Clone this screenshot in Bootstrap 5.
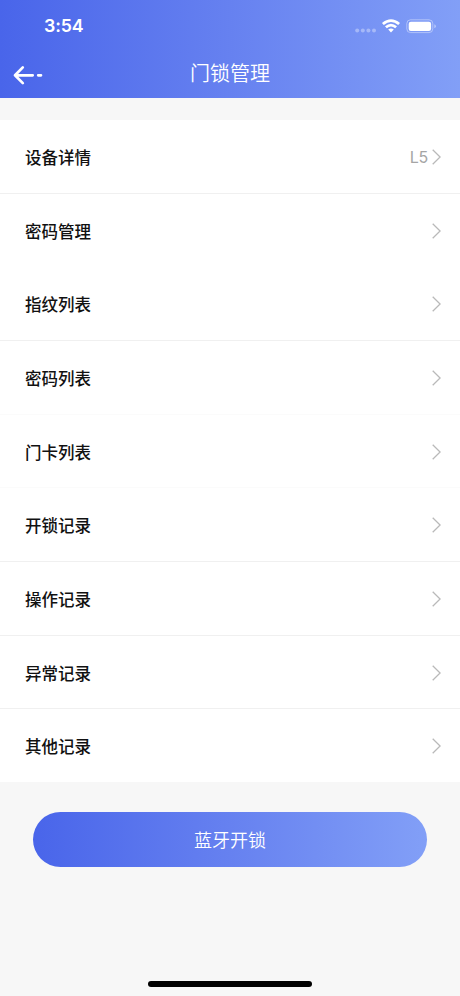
<!DOCTYPE html>
<html lang="zh-CN">
<head>
<meta charset="utf-8">
<meta name="viewport" content="width=device-width, initial-scale=1">
<title>门锁管理</title>
<link href="https://cdn.jsdelivr.net/npm/bootstrap@5.3.0/dist/css/bootstrap.min.css" rel="stylesheet">
<style>
  body { background: #f7f7f7; font-family: Inter, "Noto Sans CJK SC", sans-serif; }
  .screen { height: 996px; }
  .brand-gradient { background: linear-gradient(90deg, #4965ea 0%, #6681f0 50%, #829ff7 100%); }
  .app-header { height: 98px; margin-bottom: 22px; }
  .status-bar { height: 51px; padding-left: 44px; padding-right: 24px; }
  .clock { font-size: 17.8px; font-weight: 600; line-height: 20px; letter-spacing: -.1px; }
  .title-bar { height: 47px; display: grid; grid-template-columns: 60px 1fr 60px; }
  .page-title { font-size: 20px; font-weight: 350; line-height: 44px; font-family: "Noto Sans CJK SC", sans-serif; }
  .back-link { padding: 13px 0 0 12px; }
  .menu-list { --bs-list-group-border-radius: 0; height: 662px; }
  .menu-list .list-group-item { flex: 1 1 0; border: 0; border-bottom: 1px solid #f0f0f0; padding: 1px 19px 0 25px; color: #111; font-size: 16.5px; font-weight: 500; }
  .menu-list .list-group-item.no-rule { border-bottom-color: #fff; }
  .menu-list .list-group-item.soft-rule { border-bottom-color: #fbfbfb; }
  .item-label { padding-top: 3px; }
  .model { color: #a5a5a5; font-size: 16px; font-weight: 400; font-family: Inter, sans-serif; letter-spacing: -.2px; }
  .unlock { height: 55px; margin: 30px 33px 0; padding: 2px 0 0; border: 0; font-size: 18px; font-weight: 350; }
  .home-indicator { width: 164px; height: 6px; background: #000; margin-bottom: 9px; }
</style>
<script src="https://cdn.jsdelivr.net/npm/bootstrap@5.3.0/dist/js/bootstrap.bundle.min.js"></script>
</head>
<body>
<div class="screen d-flex flex-column overflow-hidden">
  <header class="app-header brand-gradient text-white flex-shrink-0">
    <div class="status-bar d-flex align-items-center justify-content-between">
      <span class="clock">3:54</span>
      <svg width="82" height="16" viewBox="354 17 82 16" fill="none" aria-hidden="true">
        <g fill="#fff" fill-opacity=".35">
          <circle cx="357.2" cy="29.6" r="2"/><circle cx="362.8" cy="29.6" r="2"/><circle cx="368.4" cy="29.6" r="2"/><circle cx="374" cy="29.6" r="2"/>
        </g>
        <g stroke="#fff" stroke-width="2.8">
          <path d="M382.9 23Q391 16.2 399.1 23"/>
          <path d="M385.9 26.3Q391 22 396.1 26.3"/>
        </g>
        <path d="M388.2 28.6Q391 26.4 393.8 28.6L391 31.6Z" fill="#fff"/>
        <rect x="406.8" y="18.8" width="26" height="12.8" rx="3.8" stroke="#fff" stroke-opacity=".4"/>
        <rect x="408.7" y="20.7" width="22.4" height="9.2" rx="2.2" fill="#fff"/>
        <path d="M434.3 23.2q1.6.6 1.6 2t-1.6 2z" fill="#fff" fill-opacity=".45"/>
      </svg>
    </div>
    <div class="title-bar">
      <a href="#" class="back-link text-white" aria-label="返回">
        <svg class="d-block" width="32" height="22" viewBox="12 64 32 22" fill="none" stroke="#fff" stroke-width="2.7" stroke-linecap="round" stroke-linejoin="round">
          <path d="M22.8 67.4 15 75.3l7.8 7.8M15 75.3h17.7M38.2 75.3h2.8"/>
        </svg>
      </a>
      <h1 class="page-title text-center m-0">门锁管理</h1>
    </div>
  </header>

  <nav class="menu-list list-group list-group-flush flex-shrink-0">
    <a href="#" class="list-group-item d-flex align-items-center justify-content-between"><span class="item-label">设备详情</span><span class="d-flex align-items-center gap-1"><span class="model">L5</span><svg width="9" height="16" viewBox="0 0 9 16" fill="none" stroke="#b9b9b9" stroke-width="1.3"><path d="M.7.8 8.1 8 .7 15.2"/></svg></span></a>
    <a href="#" class="list-group-item no-rule d-flex align-items-center justify-content-between"><span class="item-label">密码管理</span><svg width="9" height="16" viewBox="0 0 9 16" fill="none" stroke="#b9b9b9" stroke-width="1.3"><path d="M.7.8 8.1 8 .7 15.2"/></svg></a>
    <a href="#" class="list-group-item d-flex align-items-center justify-content-between"><span class="item-label">指纹列表</span><svg width="9" height="16" viewBox="0 0 9 16" fill="none" stroke="#b9b9b9" stroke-width="1.3"><path d="M.7.8 8.1 8 .7 15.2"/></svg></a>
    <a href="#" class="list-group-item soft-rule d-flex align-items-center justify-content-between"><span class="item-label">密码列表</span><svg width="9" height="16" viewBox="0 0 9 16" fill="none" stroke="#b9b9b9" stroke-width="1.3"><path d="M.7.8 8.1 8 .7 15.2"/></svg></a>
    <a href="#" class="list-group-item soft-rule d-flex align-items-center justify-content-between"><span class="item-label">门卡列表</span><svg width="9" height="16" viewBox="0 0 9 16" fill="none" stroke="#b9b9b9" stroke-width="1.3"><path d="M.7.8 8.1 8 .7 15.2"/></svg></a>
    <a href="#" class="list-group-item d-flex align-items-center justify-content-between"><span class="item-label">开锁记录</span><svg width="9" height="16" viewBox="0 0 9 16" fill="none" stroke="#b9b9b9" stroke-width="1.3"><path d="M.7.8 8.1 8 .7 15.2"/></svg></a>
    <a href="#" class="list-group-item d-flex align-items-center justify-content-between"><span class="item-label">操作记录</span><svg width="9" height="16" viewBox="0 0 9 16" fill="none" stroke="#b9b9b9" stroke-width="1.3"><path d="M.7.8 8.1 8 .7 15.2"/></svg></a>
    <a href="#" class="list-group-item d-flex align-items-center justify-content-between"><span class="item-label">异常记录</span><svg width="9" height="16" viewBox="0 0 9 16" fill="none" stroke="#b9b9b9" stroke-width="1.3"><path d="M.7.8 8.1 8 .7 15.2"/></svg></a>
    <a href="#" class="list-group-item no-rule d-flex align-items-center justify-content-between"><span class="item-label">其他记录</span><svg width="9" height="16" viewBox="0 0 9 16" fill="none" stroke="#b9b9b9" stroke-width="1.3"><path d="M.7.8 8.1 8 .7 15.2"/></svg></a>
  </nav>

  <button type="button" class="unlock btn rounded-pill brand-gradient text-white flex-shrink-0">蓝牙开锁</button>
  <div class="home-indicator rounded-pill mx-auto mt-auto flex-shrink-0"></div>
</div>
</body>
</html>
